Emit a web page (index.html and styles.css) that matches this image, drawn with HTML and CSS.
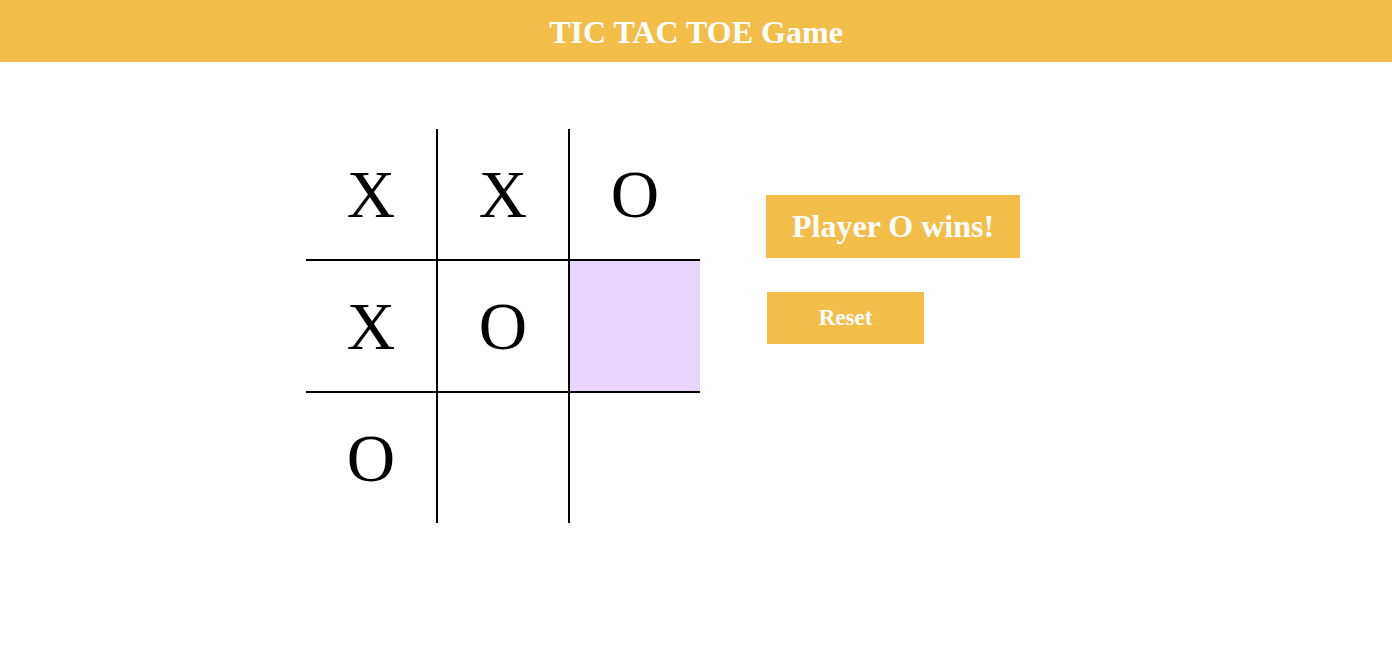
FILE: index.html
```html
<!DOCTYPE html>
<html lang="en">
<head>
<meta charset="utf-8">
<title>TIC TAC TOE Game</title>
<link rel="stylesheet" href="styles.css">
</head>
<body>
<header class="topbar">
  <h1 class="title">TIC TAC TOE Game</h1>
</header>
<main class="game">
  <div class="board">
    <div class="cell">X</div>
    <div class="cell">X</div>
    <div class="cell">O</div>
    <div class="cell">X</div>
    <div class="cell">O</div>
    <div class="cell hl"></div>
    <div class="cell">O</div>
    <div class="cell"></div>
    <div class="cell"></div>
  </div>
  <div class="panel">
    <div class="status">Player O wins!</div>
    <button class="reset" type="button">Reset</button>
  </div>
</main>
</body>
</html>
```

FILE: styles.css
```css
html, body {
  margin: 0;
  padding: 0;
  background: #ffffff;
  font-family: "Liberation Serif", "Times New Roman", serif;
}

.topbar {
  background: #f3bd4a;
  height: 62px;
  display: flex;
  justify-content: center;
}

.title {
  margin: 0;
  color: #ffffff;
  font-size: 32px;
  font-weight: bold;
  line-height: 64px;
  white-space: nowrap;
}

.game {
  display: flex;
  align-items: flex-start;
  padding-top: 67px;
  padding-left: 306px;
  gap: 66px;
}

.board {
  display: grid;
  grid-template-columns: repeat(3, 130px);
  grid-template-rows: repeat(3, 130px);
  gap: 2px;
  background: #000000;
}

.cell {
  background: #ffffff;
  display: flex;
  align-items: center;
  justify-content: center;
  font-size: 67px;
  color: #000000;
  line-height: 1;
}

.cell.hl {
  background: #e9d5fc;
}

.panel {
  display: flex;
  flex-direction: column;
  align-items: flex-start;
  margin-top: 66px;
  gap: 34px;
}

.status {
  background: #f3bd4a;
  color: #ffffff;
  font-size: 32px;
  font-weight: bold;
  padding: 13px 26px;
  white-space: nowrap;
}

.reset {
  margin-left: 1px;
  width: 157px;
  height: 52px;
  border: none;
  background: #f3bd4a;
  color: #ffffff;
  font-family: "Liberation Serif", "Times New Roman", serif;
  font-size: 23px;
  font-weight: bold;
  padding: 0;
  cursor: pointer;
}
```
